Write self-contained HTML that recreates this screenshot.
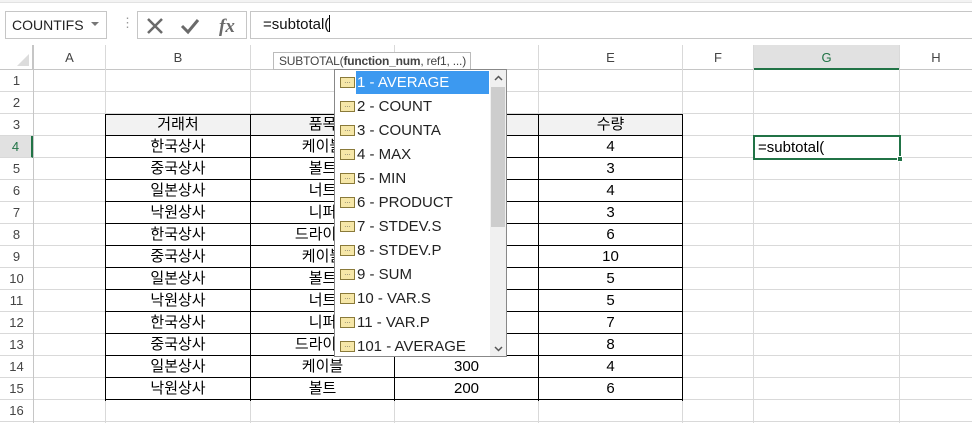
<!DOCTYPE html>
<html><head><meta charset="utf-8"><style>
*{margin:0;padding:0;box-sizing:border-box}
body{width:972px;height:423px;overflow:hidden;background:#fff;position:relative;font-family:"Liberation Sans","Noto Sans CJK KR",sans-serif;color:#000}
.a{position:absolute}
.grid{left:33px;top:70px;width:939px;height:353px;
background-image:repeating-linear-gradient(to bottom,transparent 0,transparent 21px,#d9d9d9 21px,#d9d9d9 22px);}
.vl{position:absolute;top:45px;width:1px;height:378px;background:#d9d9d9}
.ch{position:absolute;top:45px;height:25px;line-height:25px;text-align:center;font-size:13px;color:#444;border-bottom:1px solid #c6c6c6}
.rh{position:absolute;left:0;width:33px;height:22px;line-height:22px;text-align:center;font-size:13px;color:#444;border-bottom:1px solid #d9d9d9;background:#fff}
.c{position:absolute;height:22px;line-height:22px;text-align:center;font-size:15px}
.item{position:absolute;left:2px;height:24px;font-size:15px;color:#222;width:160px}
.ic{position:absolute;left:3px;top:6px;width:15px;height:11px;border:1px solid #8a7a3a;background:#f6e7a8;font-size:7px;line-height:7px;text-align:center;color:#555}
.t{position:absolute;left:20px;top:0;line-height:24px;white-space:nowrap}
</style></head><body>
<div class="a" style="left:0;top:0;width:972px;height:3px;background:#f3f3f3;border-bottom:1px solid #e2e2e2"></div>
<div class="a" style="left:5px;top:11px;width:102px;height:28px;border:1px solid #c6c6c6;font-size:14px;line-height:26px;padding-left:6px;color:#222">COUNTIFS</div>
<div class="a" style="left:91px;top:22px;width:0;height:0;border-left:4px solid transparent;border-right:4px solid transparent;border-top:4px solid #777"></div>
<div class="a" style="left:121px;top:17px;color:#999;font-size:13px;line-height:12px">⋮</div>
<div class="a" style="left:137px;top:11px;width:110px;height:28px;border:1px solid #c6c6c6"></div>
<svg class="a" style="left:145px;top:16px" width="100" height="20"><path d="M3 3L17 17M17 3L3 17" stroke="#6a6a6a" stroke-width="2.5"/><path d="M37 10L43 16L53 4" stroke="#6a6a6a" stroke-width="3" fill="none"/><text x="74" y="16" font-family="Liberation Serif,serif" font-style="italic" font-weight="bold" font-size="19" fill="#6a6a6a">fx</text></svg>
<div class="a" style="left:250px;top:11px;width:722px;height:28px;border:1px solid #c6c6c6;border-right:none;font-size:15px;line-height:26px;padding-left:12px;color:#111">=subtotal(<span style="display:inline-block;width:1px;height:17px;background:#000;vertical-align:-3px"></span></div>
<div class="a" style="left:0;top:45px;width:972px;height:25px;background:#fff"></div>
<div class="a" style="left:0;top:45px;width:33px;height:25px;border-bottom:1px solid #c6c6c6;border-right:1px solid #c6c6c6"></div>
<div class="a" style="left:17px;top:54px;width:0;height:0;border-left:12px solid transparent;border-bottom:12px solid #dcdcdc"></div>
<div class="a grid"></div>
<div class="vl" style="left:33px;background:#c6c6c6"></div>
<div class="vl" style="left:105px"></div><div class="vl" style="left:250px"></div><div class="vl" style="left:394px"></div><div class="vl" style="left:538px"></div><div class="vl" style="left:682px"></div><div class="vl" style="left:753px"></div><div class="vl" style="left:899px"></div>
<div class="ch" style="left:34px;width:71px">A</div>
<div class="ch" style="left:106px;width:144px">B</div>
<div class="ch" style="left:251px;width:143px">C</div>
<div class="ch" style="left:395px;width:143px">D</div>
<div class="ch" style="left:539px;width:143px">E</div>
<div class="ch" style="left:683px;width:70px">F</div>
<div class="ch" style="left:754px;width:145px;background:#e1e1e1;color:#217346;border-bottom:2px solid #217346">G</div>
<div class="ch" style="left:900px;width:72px">H</div>
<div class="rh" style="top:70px">1</div><div class="rh" style="top:92px">2</div><div class="rh" style="top:114px">3</div>
<div class="rh" style="top:136px;background:#e1e1e1;color:#217346;border-right:2px solid #217346">4</div>
<div class="rh" style="top:158px">5</div><div class="rh" style="top:180px">6</div><div class="rh" style="top:202px">7</div><div class="rh" style="top:224px">8</div><div class="rh" style="top:246px">9</div><div class="rh" style="top:268px">10</div><div class="rh" style="top:290px">11</div><div class="rh" style="top:312px">12</div><div class="rh" style="top:334px">13</div><div class="rh" style="top:356px">14</div><div class="rh" style="top:378px">15</div><div class="rh" style="top:400px">16</div>
<div class="a" style="left:105px;top:114px;width:578px;height:22px;background:#f2f2f2"></div>
<svg class="a" style="left:0;top:0" width="972" height="423">
<g stroke="#000" stroke-width="1">
<path d="M105.5 114V401M250.5 114V401M394.5 114V401M538.5 114V401M682.5 114V401"/>
<path d="M105 114.5H683M105 135.5H683M105 157.5H683M105 179.5H683M105 201.5H683M105 223.5H683M105 245.5H683M105 267.5H683M105 289.5H683M105 311.5H683M105 333.5H683M105 355.5H683M105 377.5H683M105 399.5H683"/>
</g></svg>
<div class="c" style="left:106px;top:114px;width:144px">거래처</div><div class="c" style="left:251px;top:114px;width:143px">품목</div><div class="c" style="left:395px;top:114px;width:143px">단가</div><div class="c" style="left:539px;top:114px;width:143px">수량</div>
<div class="c" style="left:106px;top:136px;width:144px">한국상사</div><div class="c" style="left:251px;top:136px;width:143px">케이블</div><div class="c" style="left:539px;top:136px;width:143px">4</div>
<div class="c" style="left:106px;top:158px;width:144px">중국상사</div><div class="c" style="left:251px;top:158px;width:143px">볼트</div><div class="c" style="left:539px;top:158px;width:143px">3</div>
<div class="c" style="left:106px;top:180px;width:144px">일본상사</div><div class="c" style="left:251px;top:180px;width:143px">너트</div><div class="c" style="left:539px;top:180px;width:143px">4</div>
<div class="c" style="left:106px;top:202px;width:144px">낙원상사</div><div class="c" style="left:251px;top:202px;width:143px">니퍼</div><div class="c" style="left:539px;top:202px;width:143px">3</div>
<div class="c" style="left:106px;top:224px;width:144px">한국상사</div><div class="c" style="left:251px;top:224px;width:143px">드라이버</div><div class="c" style="left:539px;top:224px;width:143px">6</div>
<div class="c" style="left:106px;top:246px;width:144px">중국상사</div><div class="c" style="left:251px;top:246px;width:143px">케이블</div><div class="c" style="left:539px;top:246px;width:143px">10</div>
<div class="c" style="left:106px;top:268px;width:144px">일본상사</div><div class="c" style="left:251px;top:268px;width:143px">볼트</div><div class="c" style="left:539px;top:268px;width:143px">5</div>
<div class="c" style="left:106px;top:290px;width:144px">낙원상사</div><div class="c" style="left:251px;top:290px;width:143px">너트</div><div class="c" style="left:539px;top:290px;width:143px">5</div>
<div class="c" style="left:106px;top:312px;width:144px">한국상사</div><div class="c" style="left:251px;top:312px;width:143px">니퍼</div><div class="c" style="left:539px;top:312px;width:143px">7</div>
<div class="c" style="left:106px;top:334px;width:144px">중국상사</div><div class="c" style="left:251px;top:334px;width:143px">드라이버</div><div class="c" style="left:539px;top:334px;width:143px">8</div>
<div class="c" style="left:106px;top:356px;width:144px">일본상사</div><div class="c" style="left:251px;top:356px;width:143px">케이블</div><div class="c" style="left:395px;top:356px;width:143px">300</div><div class="c" style="left:539px;top:356px;width:143px">4</div>
<div class="c" style="left:106px;top:378px;width:144px">낙원상사</div><div class="c" style="left:251px;top:378px;width:143px">볼트</div><div class="c" style="left:395px;top:378px;width:143px">200</div><div class="c" style="left:539px;top:378px;width:143px">6</div>
<div class="a" style="left:753px;top:135px;width:148px;height:25px;border:2px solid #217346;background:#fff;font-size:15px;line-height:21px;padding-left:3px">=subtotal(</div>
<div class="a" style="left:897px;top:156px;width:6px;height:6px;background:#217346;border:1px solid #fff"></div>
<div class="a" style="left:273px;top:52px;width:198px;height:18px;border:1px solid #bbb;background:#fff;font-size:12px;line-height:16px;padding-left:5px;color:#444;white-space:nowrap;letter-spacing:-0.2px">SUBTOTAL(<b>function_num</b>, ref1, ...)</div>
<div class="a" style="left:334px;top:69px;width:173px;height:288px;border:1px solid #888;background:#fff;overflow:hidden">
<div class="a" style="left:21px;top:1px;width:133px;height:23px;background:#3c99f0"></div>
<div class="item" style="top:1px"><span class="ic">…</span><span class="t" style="color:#fff">1 - AVERAGE</span></div>
<div class="item" style="top:25px"><span class="ic">…</span><span class="t">2 - COUNT</span></div>
<div class="item" style="top:49px"><span class="ic">…</span><span class="t">3 - COUNTA</span></div>
<div class="item" style="top:73px"><span class="ic">…</span><span class="t">4 - MAX</span></div>
<div class="item" style="top:97px"><span class="ic">…</span><span class="t">5 - MIN</span></div>
<div class="item" style="top:121px"><span class="ic">…</span><span class="t">6 - PRODUCT</span></div>
<div class="item" style="top:145px"><span class="ic">…</span><span class="t">7 - STDEV.S</span></div>
<div class="item" style="top:169px"><span class="ic">…</span><span class="t">8 - STDEV.P</span></div>
<div class="item" style="top:193px"><span class="ic">…</span><span class="t">9 - SUM</span></div>
<div class="item" style="top:217px"><span class="ic">…</span><span class="t">10 - VAR.S</span></div>
<div class="item" style="top:241px"><span class="ic">…</span><span class="t">11 - VAR.P</span></div>
<div class="item" style="top:265px"><span class="ic">…</span><span class="t">101 - AVERAGE</span></div>
<div class="a" style="left:155px;top:0;width:17px;height:287px;background:#f0f0f0"></div>
<div class="a" style="left:156px;top:17px;width:14px;height:140px;background:#cdcdcd"></div>
<svg class="a" style="left:155px;top:0" width="17" height="287"><path d="M5 10L8.5 6.5L12 10" stroke="#555" stroke-width="1.5" fill="none"/><path d="M5 277L8.5 280.5L12 277" stroke="#555" stroke-width="1.5" fill="none"/></svg>
</div>
</body></html>
